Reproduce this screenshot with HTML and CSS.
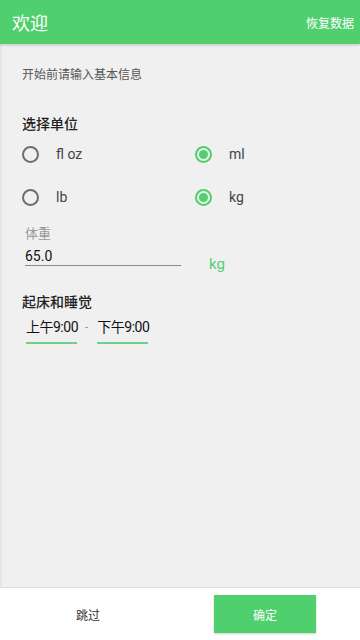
FILE: index.html
```html
<!DOCTYPE html>
<html lang="zh">
<head>
    <meta charset="UTF-8" />
    <meta name="viewport" content="width=device-width, initial-scale=1" />
    <title>欢迎</title>
    <link rel="stylesheet" href="styles.css">
</head>
<body>
    <div class="app">
        <header class="toolbar">
            <span class="title">欢迎</span>
            <span class="action">恢复数据</span>
        </header>

        <main class="content">
            <p class="intro">开始前请输入基本信息</p>

            <h2 class="section">选择单位</h2>
            <div class="units">
                <label class="radio"><span class="dot"></span>fl oz</label>
                <label class="radio on"><span class="dot"></span>ml</label>
                <label class="radio"><span class="dot"></span>lb</label>
                <label class="radio on"><span class="dot"></span>kg</label>
            </div>

            <div class="weight">
                <div class="field">
                    <span class="hint">体重</span>
                    <span class="value">65.0</span>
                </div>
                <span class="unit">kg</span>
            </div>

            <h2 class="section sleep">起床和睡觉</h2>
            <div class="times">
                <span class="time">上午9:00</span>
                <span class="dash">-</span>
                <span class="time">下午9:00</span>
            </div>
        </main>

        <footer class="bottom">
            <button class="skip">跳过</button>
            <button class="ok">确定</button>
        </footer>
    </div>
</body>
</html>
```

FILE: styles.css
```css
* {
    box-sizing: border-box;
}
body {
    margin: 0;
    font-family: Roboto, "Noto Sans CJK SC", sans-serif;
    background-color: #f0f0f0;
}
.app {
    display: flex;
    flex-direction: column;
    height: 640px;
}
.toolbar {
    height: 44px;
    background-color: #50cf6e;
    color: #fff;
    display: flex;
    align-items: center;
    justify-content: space-between;
    padding: 0 6px 0 12px;
    box-shadow: 0 1px 3px rgba(0, 0, 0, 0.2);
    position: relative;
    z-index: 1;
}
.title {
    font-size: 18px;
}
.action {
    font-size: 12px;
}
.content {
    flex: 1;
    padding: 0 0 0 20px;
    border-left: 2px solid #e6e6e6;
    border-bottom: 1px solid #dcdcdc;
}
.intro {
    margin: 23px 0 0;
    font-size: 12px;
    color: #555;
    line-height: 16px;
}
.section {
    margin: 32px 0 0;
    font-size: 14px;
    font-weight: 500;
    color: #222;
    line-height: 18px;
}
.units {
    display: grid;
    grid-template-columns: 173px 1fr;
    row-gap: 25px;
    margin-top: 12px;
}
.radio {
    display: flex;
    align-items: center;
    height: 18px;
    font-size: 14px;
    color: #444;
}
.dot {
    width: 17px;
    height: 17px;
    border: 2px solid #6d6d6d;
    border-radius: 50%;
    margin-right: 17px;
    display: flex;
    align-items: center;
    justify-content: center;
}
.radio.on .dot {
    border-color: #50cf6e;
}
.radio.on .dot::after {
    content: "";
    width: 9px;
    height: 9px;
    border-radius: 50%;
    background-color: #50cf6e;
}
.weight {
    display: flex;
    align-items: flex-end;
    margin-top: 19px;
    padding-left: 3px;
}
.field {
    width: 156px;
    display: flex;
    flex-direction: column;
    border-bottom: 1px solid #8a8a8a;
}
.hint {
    font-size: 13px;
    color: #999;
    line-height: 18px;
}
.value {
    font-size: 14px;
    color: #111;
    margin-top: 4px;
    line-height: 18px;
}
.unit {
    margin-left: 28px;
    margin-bottom: -7px;
    font-size: 15px;
    color: #50cf6e;
}
.sleep {
    margin-top: 27px;
}
.times {
    display: flex;
    align-items: flex-start;
    margin-top: 7px;
    padding-left: 4px;
}
.time {
    font-size: 14px;
    letter-spacing: -0.5px;
    color: #111;
    line-height: 18px;
    padding: 0 0 6px;
    border-bottom: 2px solid #72cf86;
    width: 51px;
    white-space: nowrap;
}
.dash {
    font-size: 12px;
    color: #999;
    margin: 0 9px 0 8px;
    line-height: 18px;
}
.bottom {
    height: 52px;
    background-color: #fff;
    display: flex;
    align-items: center;
}
button {
    font-family: Roboto, "Noto Sans CJK SC", sans-serif;
    border: none;
    font-size: 12px;
    cursor: pointer;
}
.skip {
    background: none;
    color: #333;
    width: 176px;
    height: 38px;
}
.ok {
    margin-left: 38px;
    width: 102px;
    height: 38px;
    background-color: #50cf6e;
    color: #fff;
    box-shadow: 0 1px 2px rgba(0, 0, 0, 0.2);
}
```
